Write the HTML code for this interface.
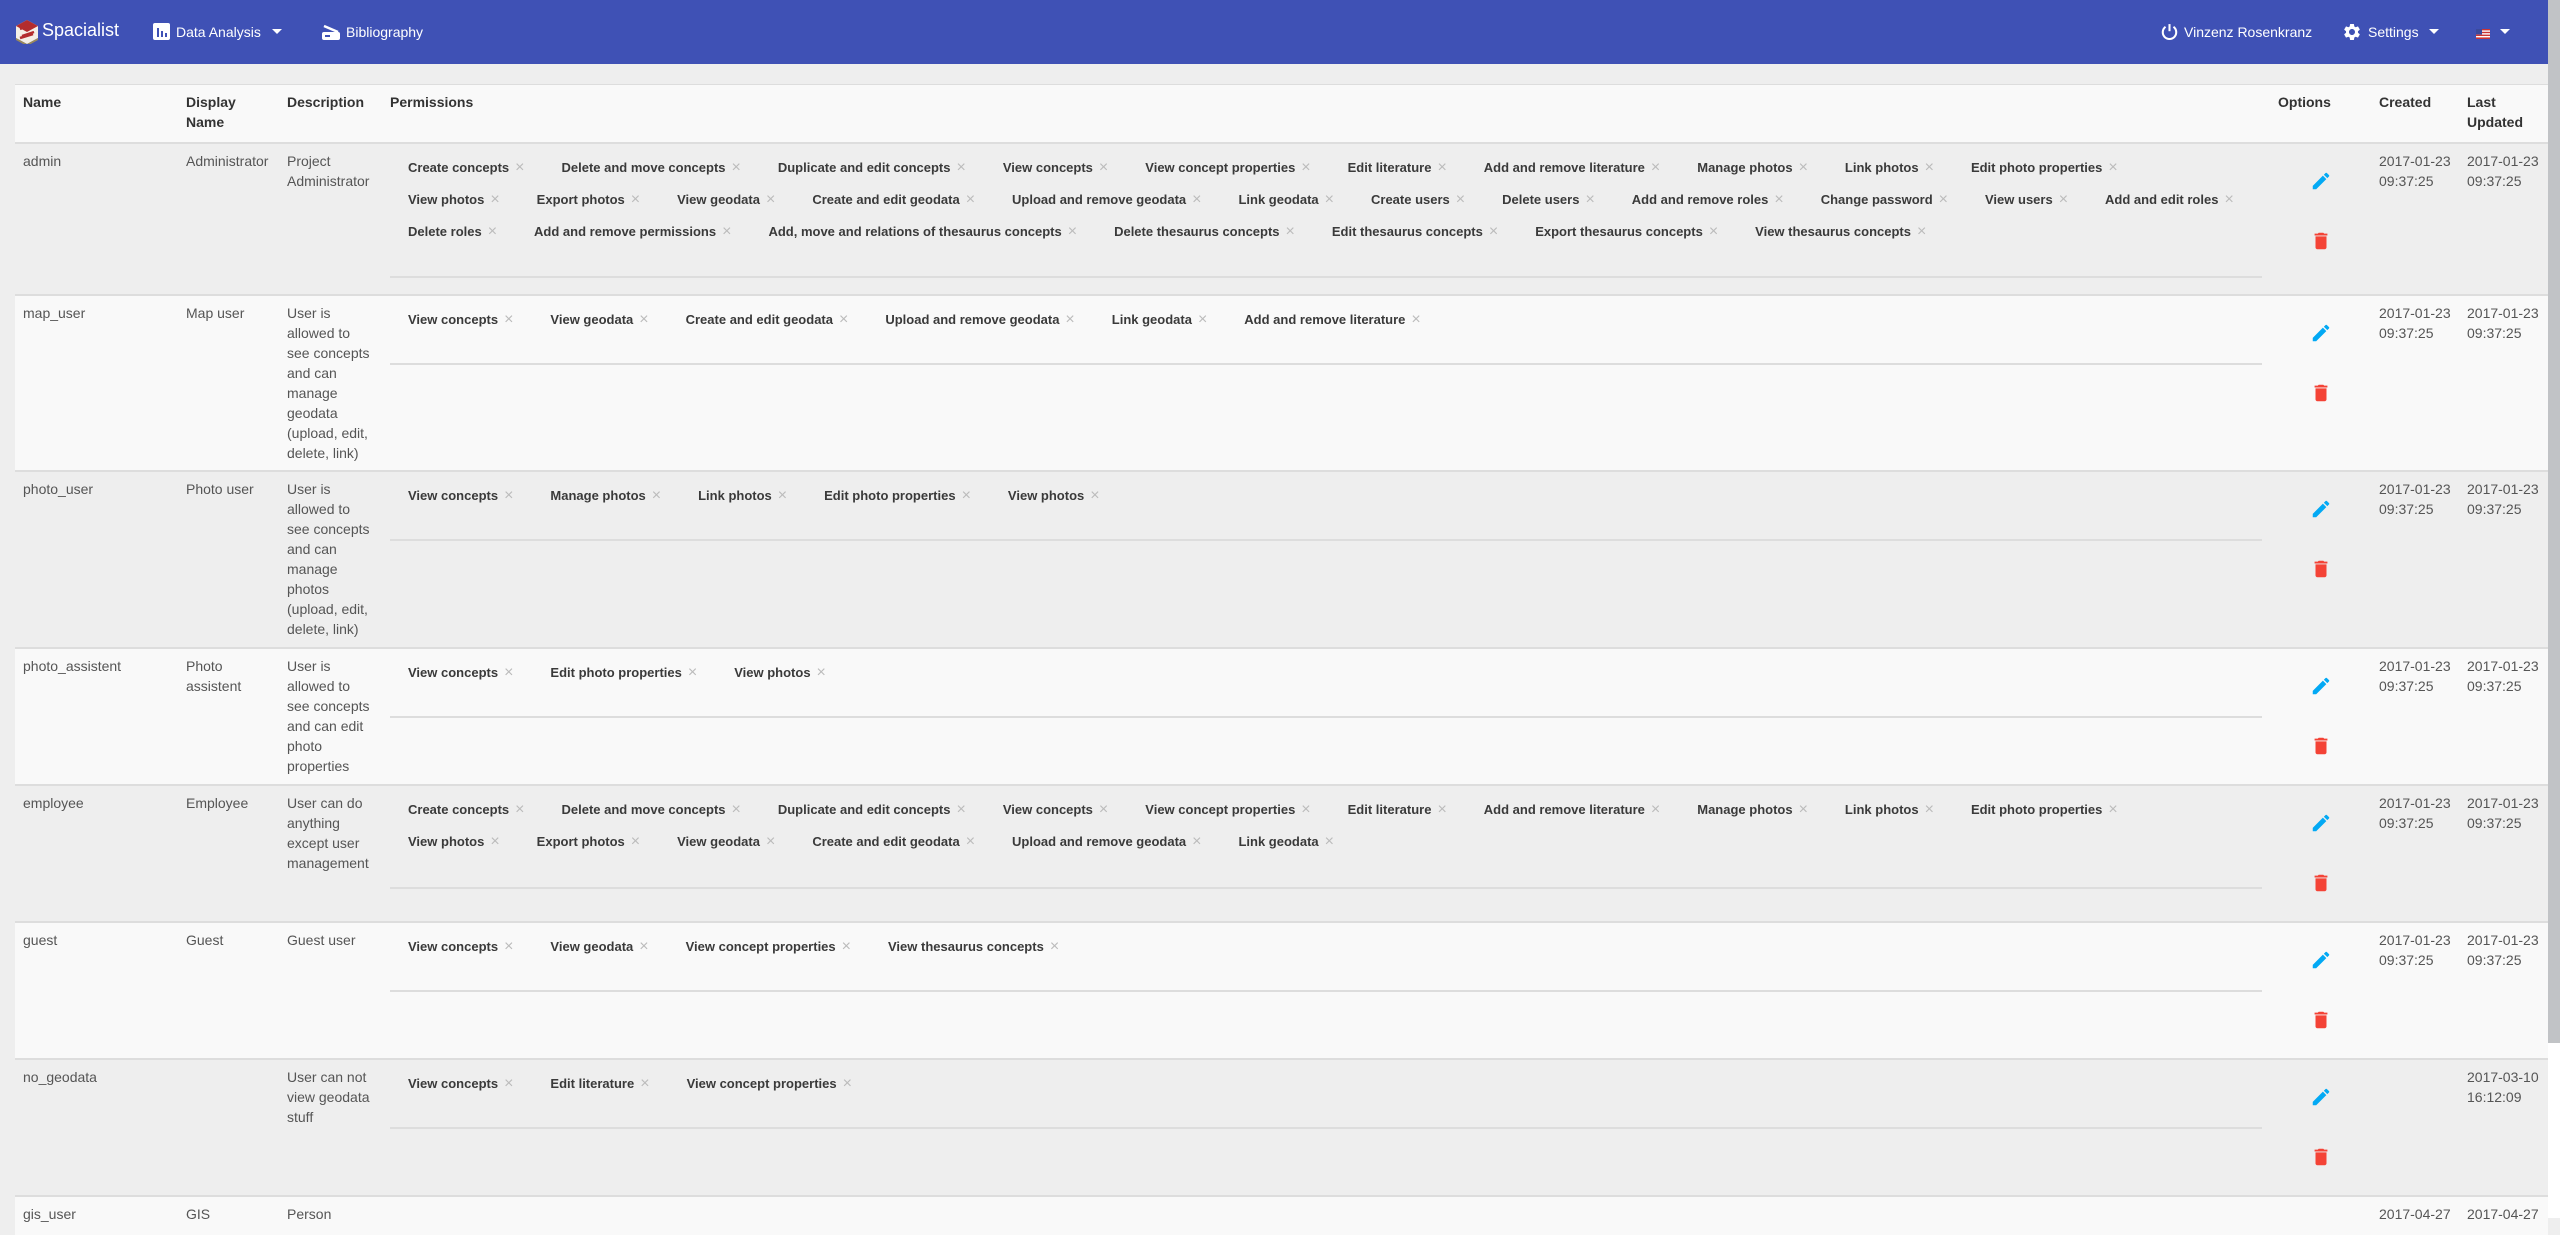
<!DOCTYPE html>
<html><head><meta charset="utf-8"><style>
*{box-sizing:border-box;margin:0;padding:0}
body{width:2560px;height:1218px;overflow:hidden;background:#eeeeee;font-family:"Liberation Sans",Arial,sans-serif;position:relative}
.nav{position:absolute;left:0;top:0;width:2548px;height:64px;background:#3f51b5;color:#fff}
.nav .t{position:absolute;top:23px;font-size:14px;line-height:18px;color:#fff}
.sb{position:absolute;left:2548px;top:0;width:12px;height:1218px;background:#fff}
.sb div{position:absolute;left:0;top:0;width:12px;height:1043px;background:#c1c3c6}
.tbl{position:absolute;left:15px;top:84px;width:2533px;height:1134px;border-top:1px solid #ddd}
.row{position:absolute;left:0;width:2533px;border-top:2px solid #ddd}
.hd{top:0;height:58px;background:#f9f9f9;border-top:none}
.hd div{position:absolute;top:7px;font-weight:bold;font-size:14px;line-height:20px;color:#333}
.c{position:absolute;top:7px;font-size:14px;line-height:20px;color:#555}
.perm{position:absolute;left:375px;top:8px;width:1872px}
.cr{height:32px;line-height:32px;white-space:nowrap;padding-left:18px;font-size:13px;font-weight:bold;color:#3a3a3a}
.cr span{margin-right:37px}
.cr i{font-style:normal;font-weight:normal;color:#bbb;font-size:16px;margin-left:6px}
.ul{position:absolute;left:375px;width:1872px;height:2px;background:#ddd}
.ed{position:absolute;left:2295px;width:22px;height:22px}
.tr{position:absolute;left:2295px;width:22px;height:22px}
.a{background:#eeeeee}.b{background:#f9f9f9}
</style></head><body>
<div class="nav">
<svg style="position:absolute;left:16px;top:20px" width="22" height="24" viewBox="0 0 22 24"><polygon points="11,0 22,6 22,18 11,24 0,18 0,6" fill="#f4efe6"/><polygon points="11,0 22,6 11,12 0,6" fill="#b32d2e"/><path d="M4 9 L16 5 M18 12 L6 16 M4 18 L17 14" stroke="#b32d2e" stroke-width="2.5"/><polygon points="0,18 11,24 22,18 22,20 11,26 0,20" fill="#9b8a5a"/></svg>
<div class="t" style="left:42px;top:19px;font-size:18px;line-height:22px">Spacialist</div>
<svg style="position:absolute;left:153px;top:23px" width="17" height="17" viewBox="0 0 17 17"><rect width="17" height="17" rx="2" fill="#fff"/><rect x="4" y="5" width="2" height="9" fill="#3f51b5"/><rect x="8" y="8" width="2" height="6" fill="#3f51b5"/><rect x="12" y="10" width="2" height="4" fill="#3f51b5"/></svg>
<div class="t" style="left:176px">Data Analysis</div>
<svg style="position:absolute;left:272px;top:29px" width="10" height="6"><polygon points="0,0 10,0 5,5" fill="#fff"/></svg>
<svg style="position:absolute;left:322px;top:24px" width="18" height="16" viewBox="0 0 18 16"><path d="M2 2 L16 8" stroke="#fff" stroke-width="2.5"/><rect x="0" y="8" width="18" height="8" rx="2" fill="#fff"/><rect x="3" y="11" width="5" height="2" fill="#3f51b5"/></svg>
<div class="t" style="left:346px">Bibliography</div>
<svg style="position:absolute;left:2160px;top:22px" width="19" height="20" viewBox="0 0 24 24"><path d="M12 2v9" stroke="#fff" stroke-width="2.6" fill="none"/><path d="M7 5.5A8.5 8.5 0 1 0 17 5.5" stroke="#fff" stroke-width="2.6" fill="none"/></svg>
<div class="t" style="left:2184px">Vinzenz Rosenkranz</div>
<svg style="position:absolute;left:2342px;top:22px" width="20" height="20" viewBox="0 0 24 24"><path fill="#fff" d="M19.14 12.94c.04-.3.06-.61.06-.94 0-.32-.02-.64-.07-.94l2.03-1.58a.49.49 0 0 0 .12-.61l-1.92-3.32a.488.488 0 0 0-.59-.22l-2.39.96c-.5-.38-1.030-.7-1.62-.94l-.36-2.54a.484.484 0 0 0-.48-.41h-3.84c-.24 0-.43.17-.47.41l-.36 2.54c-.59.24-1.13.57-1.62.94l-2.39-.96c-.22-.08-.47 0-.59.22L2.74 8.87c-.12.21-.08.47.12.61l2.03 1.58c-.05.3-.09.63-.09.94s.2.64.07.94l-2.03 1.58a.49.49 0 0 0-.12.61l1.92 3.32c.12.22.37.29.59.22l2.39-.96c.5.38 1.03.7 1.62.94l.36 2.54c.05.24.24.41.48.41h3.84c.24 0 .44-.17.47-.41l.36-2.54c.59-.24 1.13-.56 1.62-.94l2.39.96c.22.08.47 0 .59-.22l1.92-3.32c.12-.22.07-.47-.12-.61l-2.01-1.58zM12 15.6c-1.98 0-3.6-1.62-3.6-3.6s1.62-3.6 3.6-3.6 3.6 1.62 3.6 3.6-1.62 3.6-3.6 3.6z"/></svg>
<div class="t" style="left:2368px">Settings</div>
<svg style="position:absolute;left:2429px;top:29px" width="10" height="6"><polygon points="0,0 10,0 5,5" fill="#fff"/></svg>
<svg style="position:absolute;left:2476px;top:29px" width="14" height="10"><rect width="14" height="10" fill="#fff"/><rect y="0" width="14" height="1.4" fill="#c33"/><rect y="2.8" width="14" height="1.4" fill="#c33"/><rect y="5.6" width="14" height="1.4" fill="#c33"/><rect y="8.4" width="14" height="1.6" fill="#c33"/><rect width="6" height="5.5" fill="#3b4a9c"/></svg>
<svg style="position:absolute;left:2500px;top:29px" width="10" height="6"><polygon points="0,0 10,0 5,5" fill="#fff"/></svg>
</div>
<div class="sb"><div></div></div>

<div class="tbl">
<div class="row hd">
<div style="left:8px">Name</div><div style="left:171px">Display<br>Name</div><div style="left:272px">Description</div><div style="left:375px">Permissions</div><div style="left:2263px">Options</div><div style="left:2364px">Created</div><div style="left:2452px">Last<br>Updated</div>
</div>

<div class="row a" style="top:57px;height:152px">
<div class="c" style="left:8px">admin</div><div class="c" style="left:171px">Administrator</div><div class="c" style="left:272px">Project<br>Administrator</div>
<div class="perm">
<div class="cr"><span>Create concepts<i>×</i></span><span>Delete and move concepts<i>×</i></span><span>Duplicate and edit concepts<i>×</i></span><span>View concepts<i>×</i></span><span>View concept properties<i>×</i></span><span>Edit literature<i>×</i></span><span>Add and remove literature<i>×</i></span><span>Manage photos<i>×</i></span><span>Link photos<i>×</i></span><span>Edit photo properties<i>×</i></span></div>
<div class="cr"><span>View photos<i>×</i></span><span>Export photos<i>×</i></span><span>View geodata<i>×</i></span><span>Create and edit geodata<i>×</i></span><span>Upload and remove geodata<i>×</i></span><span>Link geodata<i>×</i></span><span>Create users<i>×</i></span><span>Delete users<i>×</i></span><span>Add and remove roles<i>×</i></span><span>Change password<i>×</i></span><span>View users<i>×</i></span><span>Add and edit roles<i>×</i></span></div>
<div class="cr"><span>Delete roles<i>×</i></span><span>Add and remove permissions<i>×</i></span><span>Add, move and relations of thesaurus concepts<i>×</i></span><span>Delete thesaurus concepts<i>×</i></span><span>Edit thesaurus concepts<i>×</i></span><span>Export thesaurus concepts<i>×</i></span><span>View thesaurus concepts<i>×</i></span></div>
</div>
<div class="ul" style="top:132px"></div>
<svg class="ed" style="top:26px" viewBox="0 0 24 24"><path fill="#03a9f4" d="M3 17.25V21h3.75L17.81 9.94l-3.75-3.75L3 17.25zM20.71 7.04a1 1 0 0 0 0-1.41l-2.34-2.34a1 1 0 0 0-1.41 0l-1.83 1.83 3.75 3.75 1.83-1.83z"/></svg>
<svg class="tr" style="top:86px" viewBox="0 0 24 24"><path fill="#f44336" d="M6 19c0 1.1.9 2 2 2h8c1.1 0 2-.9 2-2V7H6v12zM19 4h-3.5l-1-1h-5l-1 1H5v2h14V4z"/></svg>
<div class="c" style="left:2364px">2017-01-23<br>09:37:25</div><div class="c" style="left:2452px">2017-01-23<br>09:37:25</div>
</div>

<div class="row b" style="top:209px;height:176px">
<div class="c" style="left:8px">map_user</div><div class="c" style="left:171px">Map user</div><div class="c" style="left:272px">User is<br>allowed to<br>see concepts<br>and can<br>manage<br>geodata<br>(upload, edit,<br>delete, link)</div>
<div class="perm"><div class="cr"><span>View concepts<i>×</i></span><span>View geodata<i>×</i></span><span>Create and edit geodata<i>×</i></span><span>Upload and remove geodata<i>×</i></span><span>Link geodata<i>×</i></span><span>Add and remove literature<i>×</i></span></div></div>
<div class="ul" style="top:67px"></div>
<svg class="ed" style="top:26px" viewBox="0 0 24 24"><path fill="#03a9f4" d="M3 17.25V21h3.75L17.81 9.94l-3.75-3.75L3 17.25zM20.71 7.04a1 1 0 0 0 0-1.41l-2.34-2.34a1 1 0 0 0-1.41 0l-1.83 1.83 3.75 3.75 1.83-1.83z"/></svg>
<svg class="tr" style="top:86px" viewBox="0 0 24 24"><path fill="#f44336" d="M6 19c0 1.1.9 2 2 2h8c1.1 0 2-.9 2-2V7H6v12zM19 4h-3.5l-1-1h-5l-1 1H5v2h14V4z"/></svg>
<div class="c" style="left:2364px">2017-01-23<br>09:37:25</div><div class="c" style="left:2452px">2017-01-23<br>09:37:25</div>
</div>

<div class="row a" style="top:385px;height:177px">
<div class="c" style="left:8px">photo_user</div><div class="c" style="left:171px">Photo user</div><div class="c" style="left:272px">User is<br>allowed to<br>see concepts<br>and can<br>manage<br>photos<br>(upload, edit,<br>delete, link)</div>
<div class="perm"><div class="cr"><span>View concepts<i>×</i></span><span>Manage photos<i>×</i></span><span>Link photos<i>×</i></span><span>Edit photo properties<i>×</i></span><span>View photos<i>×</i></span></div></div>
<div class="ul" style="top:67px"></div>
<svg class="ed" style="top:26px" viewBox="0 0 24 24"><path fill="#03a9f4" d="M3 17.25V21h3.75L17.81 9.94l-3.75-3.75L3 17.25zM20.71 7.04a1 1 0 0 0 0-1.41l-2.34-2.34a1 1 0 0 0-1.41 0l-1.83 1.83 3.75 3.75 1.83-1.83z"/></svg>
<svg class="tr" style="top:86px" viewBox="0 0 24 24"><path fill="#f44336" d="M6 19c0 1.1.9 2 2 2h8c1.1 0 2-.9 2-2V7H6v12zM19 4h-3.5l-1-1h-5l-1 1H5v2h14V4z"/></svg>
<div class="c" style="left:2364px">2017-01-23<br>09:37:25</div><div class="c" style="left:2452px">2017-01-23<br>09:37:25</div>
</div>

<div class="row b" style="top:562px;height:137px">
<div class="c" style="left:8px">photo_assistent</div><div class="c" style="left:171px">Photo<br>assistent</div><div class="c" style="left:272px">User is<br>allowed to<br>see concepts<br>and can edit<br>photo<br>properties</div>
<div class="perm"><div class="cr"><span>View concepts<i>×</i></span><span>Edit photo properties<i>×</i></span><span>View photos<i>×</i></span></div></div>
<div class="ul" style="top:67px"></div>
<svg class="ed" style="top:26px" viewBox="0 0 24 24"><path fill="#03a9f4" d="M3 17.25V21h3.75L17.81 9.94l-3.75-3.75L3 17.25zM20.71 7.04a1 1 0 0 0 0-1.41l-2.34-2.34a1 1 0 0 0-1.41 0l-1.83 1.83 3.75 3.75 1.83-1.83z"/></svg>
<svg class="tr" style="top:86px" viewBox="0 0 24 24"><path fill="#f44336" d="M6 19c0 1.1.9 2 2 2h8c1.1 0 2-.9 2-2V7H6v12zM19 4h-3.5l-1-1h-5l-1 1H5v2h14V4z"/></svg>
<div class="c" style="left:2364px">2017-01-23<br>09:37:25</div><div class="c" style="left:2452px">2017-01-23<br>09:37:25</div>
</div>

<div class="row a" style="top:699px;height:137px">
<div class="c" style="left:8px">employee</div><div class="c" style="left:171px">Employee</div><div class="c" style="left:272px">User can do<br>anything<br>except user<br>management</div>
<div class="perm">
<div class="cr"><span>Create concepts<i>×</i></span><span>Delete and move concepts<i>×</i></span><span>Duplicate and edit concepts<i>×</i></span><span>View concepts<i>×</i></span><span>View concept properties<i>×</i></span><span>Edit literature<i>×</i></span><span>Add and remove literature<i>×</i></span><span>Manage photos<i>×</i></span><span>Link photos<i>×</i></span><span>Edit photo properties<i>×</i></span></div>
<div class="cr"><span>View photos<i>×</i></span><span>Export photos<i>×</i></span><span>View geodata<i>×</i></span><span>Create and edit geodata<i>×</i></span><span>Upload and remove geodata<i>×</i></span><span>Link geodata<i>×</i></span></div>
</div>
<div class="ul" style="top:101px"></div>
<svg class="ed" style="top:26px" viewBox="0 0 24 24"><path fill="#03a9f4" d="M3 17.25V21h3.75L17.81 9.94l-3.75-3.75L3 17.25zM20.71 7.04a1 1 0 0 0 0-1.41l-2.34-2.34a1 1 0 0 0-1.41 0l-1.83 1.83 3.75 3.75 1.83-1.83z"/></svg>
<svg class="tr" style="top:86px" viewBox="0 0 24 24"><path fill="#f44336" d="M6 19c0 1.1.9 2 2 2h8c1.1 0 2-.9 2-2V7H6v12zM19 4h-3.5l-1-1h-5l-1 1H5v2h14V4z"/></svg>
<div class="c" style="left:2364px">2017-01-23<br>09:37:25</div><div class="c" style="left:2452px">2017-01-23<br>09:37:25</div>
</div>

<div class="row b" style="top:836px;height:137px">
<div class="c" style="left:8px">guest</div><div class="c" style="left:171px">Guest</div><div class="c" style="left:272px">Guest user</div>
<div class="perm"><div class="cr"><span>View concepts<i>×</i></span><span>View geodata<i>×</i></span><span>View concept properties<i>×</i></span><span>View thesaurus concepts<i>×</i></span></div></div>
<div class="ul" style="top:67px"></div>
<svg class="ed" style="top:26px" viewBox="0 0 24 24"><path fill="#03a9f4" d="M3 17.25V21h3.75L17.81 9.94l-3.75-3.75L3 17.25zM20.71 7.04a1 1 0 0 0 0-1.41l-2.34-2.34a1 1 0 0 0-1.41 0l-1.83 1.83 3.75 3.75 1.83-1.83z"/></svg>
<svg class="tr" style="top:86px" viewBox="0 0 24 24"><path fill="#f44336" d="M6 19c0 1.1.9 2 2 2h8c1.1 0 2-.9 2-2V7H6v12zM19 4h-3.5l-1-1h-5l-1 1H5v2h14V4z"/></svg>
<div class="c" style="left:2364px">2017-01-23<br>09:37:25</div><div class="c" style="left:2452px">2017-01-23<br>09:37:25</div>
</div>

<div class="row a" style="top:973px;height:137px">
<div class="c" style="left:8px">no_geodata</div><div class="c" style="left:272px">User can not<br>view geodata<br>stuff</div>
<div class="perm"><div class="cr"><span>View concepts<i>×</i></span><span>Edit literature<i>×</i></span><span>View concept properties<i>×</i></span></div></div>
<div class="ul" style="top:67px"></div>
<svg class="ed" style="top:26px" viewBox="0 0 24 24"><path fill="#03a9f4" d="M3 17.25V21h3.75L17.81 9.94l-3.75-3.75L3 17.25zM20.71 7.04a1 1 0 0 0 0-1.41l-2.34-2.34a1 1 0 0 0-1.41 0l-1.83 1.83 3.75 3.75 1.83-1.83z"/></svg>
<svg class="tr" style="top:86px" viewBox="0 0 24 24"><path fill="#f44336" d="M6 19c0 1.1.9 2 2 2h8c1.1 0 2-.9 2-2V7H6v12zM19 4h-3.5l-1-1h-5l-1 1H5v2h14V4z"/></svg>
<div class="c" style="left:2452px">2017-03-10<br>16:12:09</div>
</div>

<div class="row b" style="top:1110px;height:40px">
<div class="c" style="left:8px">gis_user</div><div class="c" style="left:171px">GIS</div><div class="c" style="left:272px">Person</div>
<div class="c" style="left:2364px">2017-04-27</div><div class="c" style="left:2452px">2017-04-27</div>
</div>
</div>
</body></html>
